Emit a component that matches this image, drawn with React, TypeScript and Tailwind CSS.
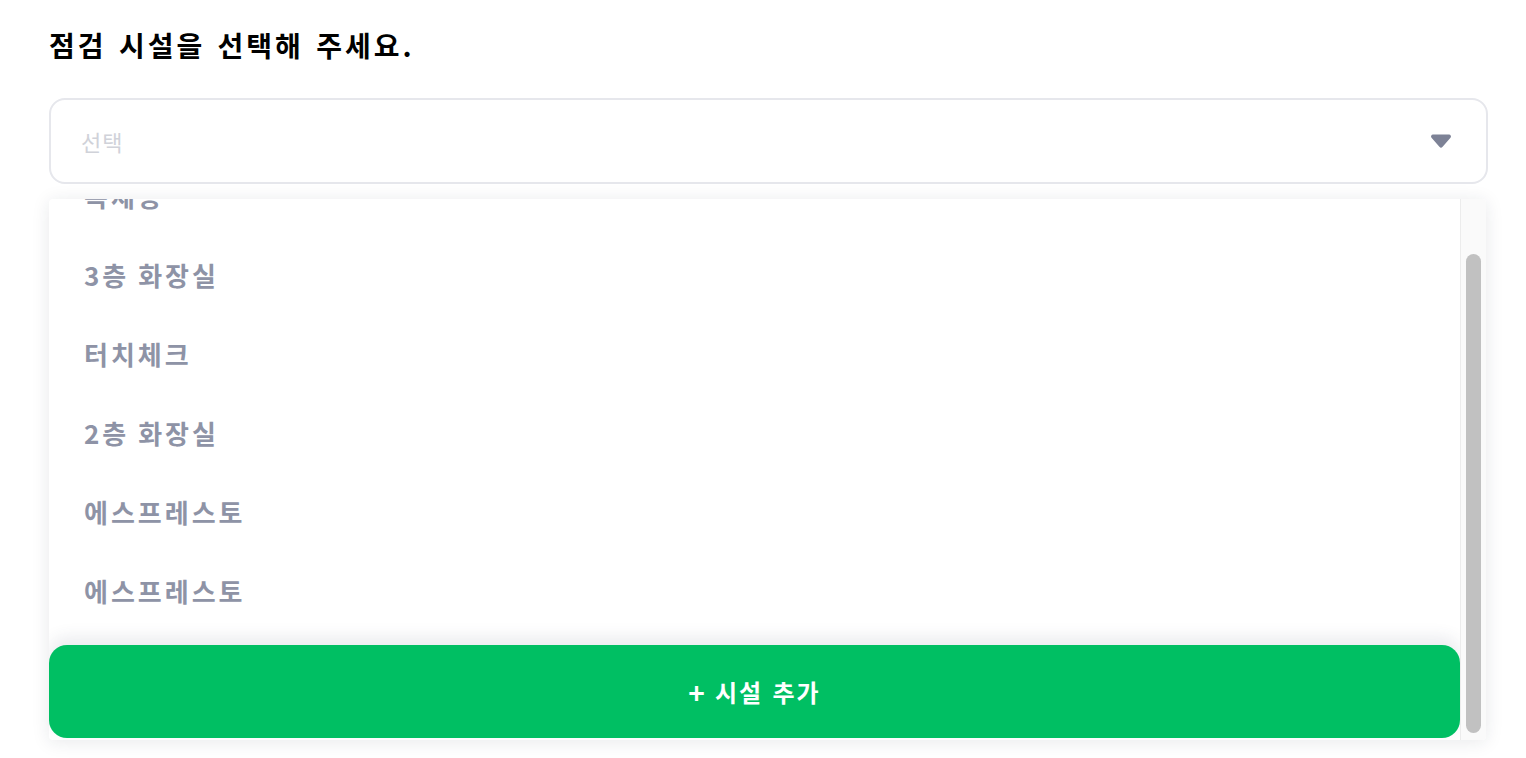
const items = ["복제용", "3층 화장실", "터치체크", "2층 화장실", "에스프레스토", "에스프레스토", "1층 로비"];

export default function App() {
  return (
    <div
      className="h-[758px] w-full overflow-hidden bg-white pl-[49px] pr-[38px] pt-[27px]"
      style={{ fontFamily: '"Noto Sans CJK KR", "Noto Sans", sans-serif' }}
    >
      <h1 className="text-[28px] font-bold leading-[36px] tracking-[3px] [word-spacing:3px] text-black">
        점검 시설을 선택해 주세요.
      </h1>

      <div className="mt-[35px] flex h-[86px] items-center justify-between rounded-[16px] border-2 border-[#e6e7ec] pl-[30px] pr-[34px]">
        <span className="text-[22px] tracking-[1px] text-[#d0d2d9]">선택</span>
        <svg width="22" height="16" viewBox="0 0 22 16">
          <path d="M3 1.5 H19 a2 2 0 0 1 1.5 3.3 L12.6 13.8 a2.2 2.2 0 0 1 -3.2 0 L1.5 4.8 A2 2 0 0 1 3 1.5 Z" fill="#7d8296" />
        </svg>
      </div>

      <div className="mt-[15px] mr-[2px] flex h-[541px] overflow-hidden rounded-[4px] bg-white shadow-[0_2px_18px_rgba(30,35,60,0.10)]">
        <div className="flex min-w-0 flex-1 flex-col">
          <div className="flex-1 overflow-hidden">
            <ul className="-mt-[43px]">
              {items.map((item, i) => (
                <li
                  key={i}
                  className="flex h-[79px] items-center pl-[35px] text-[26px] font-bold tracking-[3px] text-[#8e93a6]"
                >
                  {item}
                </li>
              ))}
            </ul>
          </div>
          <div>
            <button className="flex h-[93px] w-full items-center justify-center gap-[8px] rounded-[18px] bg-[#00bf63] text-[24px] font-bold tracking-[2px] [word-spacing:2px] text-white shadow-[0_-8px_16px_rgba(60,70,100,0.10)]">
              <span className="text-[28px] leading-none">+</span>
              <span>시설 추가</span>
            </button>
            <div className="h-[2px]" />
          </div>
        </div>
        <div className="flex w-[26px] flex-col border-l border-[#ececec] bg-[#fafafa] pt-[55px] pb-[7px]">
          <div className="mx-auto w-[15px] flex-1 rounded-full bg-[#c1c1c1]" />
        </div>
      </div>
    </div>
  );
}
